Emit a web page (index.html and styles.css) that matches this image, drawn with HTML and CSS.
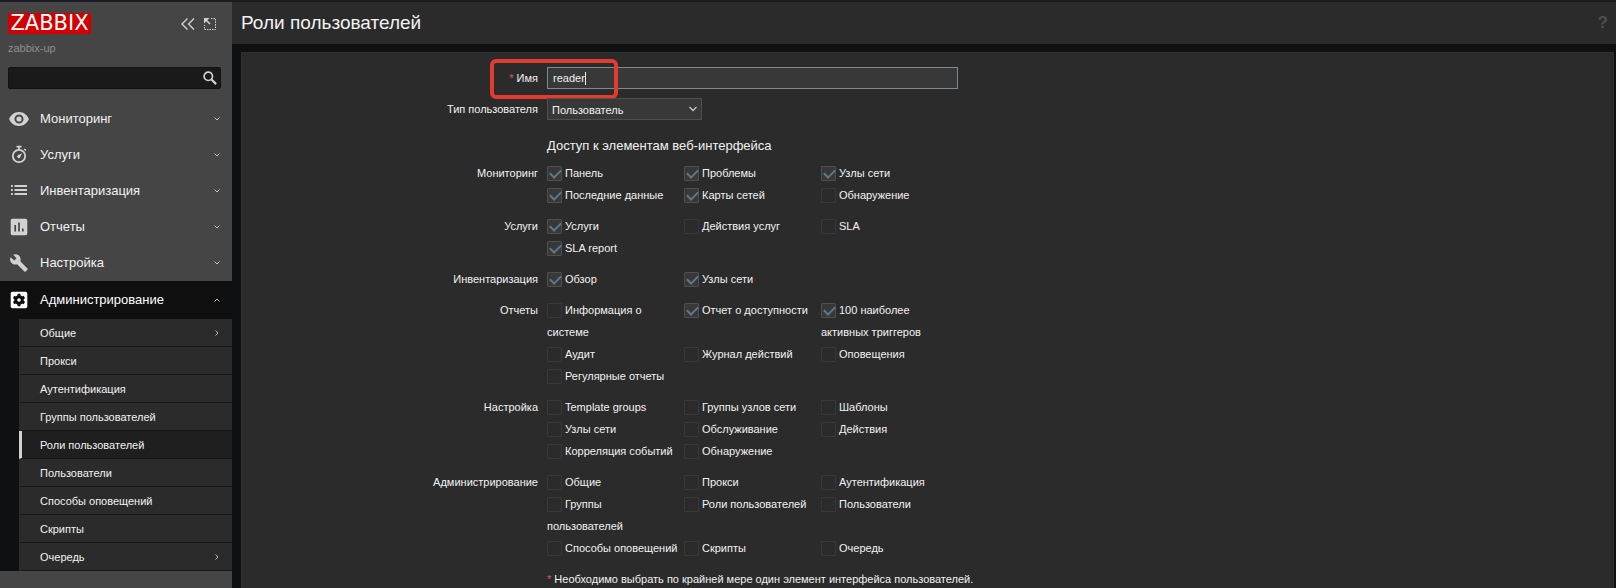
FILE: index.html
```html
<!DOCTYPE html>
<html lang="ru">
<head>
<meta charset="utf-8">
<title>Роли пользователей</title>
<link rel="stylesheet" href="styles.css">
</head>
<body>
<div class="layout">
  <aside class="sidebar">
    <div class="brand">
      <a class="logo" href="#">ZABBIX</a>
      <div class="brand-actions">
        <button type="button" aria-label="Свернуть">
          <svg width="14" height="14" viewBox="0 0 14 14" fill="none" stroke="#d2d2d2" stroke-width="1.4"><path d="M6.5 1.5 1 7l5.500 5.500M13 1.500 7.500 7l5.500 5.500"/></svg>
        </button>
        <button type="button" aria-label="Скрыть">
          <svg width="12" height="12" viewBox="0 0 12 12" fill="none" stroke="#d2d2d2"><path d="M7 .5h4.500v11H.5V7" stroke-dasharray="1.500 1"/><path d="M6 6 2 2"  stroke-width="1.600"/><path d="M0 0h5.500L0 5.500z" fill="#d2d2d2" stroke="none"/></svg>
        </button>
      </div>
    </div>
    <div class="server">zabbix-up</div>
    <form class="search">
      <input type="text" aria-label="Поиск">
      <button type="button" aria-label="Найти">
        <svg width="14" height="14" viewBox="0 0 14 14" fill="none" stroke="#d2d2d2"><circle cx="5.300" cy="5.300" r="4.200" stroke-width="1.700"/><path d="m8.300 8.300 4.800 4.800" stroke-width="2.200"/></svg>
      </button>
    </form>
    <nav class="menu">
      <a href="#"><svg class="icon" viewBox="0 0 20 20"><path fill="#d2d2d2" fill-rule="evenodd" d="M10 3C5.500 3 1.700 5.800.1 10c1.600 4.200 5.400 7 9.900 7s8.300-2.800 9.900-7C18.300 5.800 14.500 3 10 3zm0 11.500a4.500 4.500 0 1 1 0-9 4.500 4.500 0 0 1 0 9z"/><circle cx="10" cy="10" r="2.600" fill="#d2d2d2"/></svg><span>Мониторинг</span><svg class="arrow" viewBox="0 0 6 6"><path d="m.5 1.500 2.500 2.500 2.500-2.500"/></svg></a>
      <a href="#"><svg class="icon" viewBox="0 0 20 20" fill="none" stroke="#d2d2d2"><circle cx="10" cy="11" r="6.200" stroke-width="1.800"/><path d="M7.500 1.700h5M10 2v3M15.300 4l1.500 1.500" stroke-width="1.700"/><path d="M13 8.200 11.200 12.300a1.600 1.600 0 1 1-2.400-2z" fill="#d2d2d2" stroke="none"/></svg><span>Услуги</span><svg class="arrow" viewBox="0 0 6 6"><path d="m.5 1.500 2.500 2.500 2.500-2.500"/></svg></a>
      <a href="#"><svg class="icon" viewBox="0 0 20 20" stroke="#d2d2d2" stroke-width="2"><path d="M2 5h1.800M5.500 5H18M2 9h1.800M5.500 9H18M2 13h1.800M5.500 13H18"/></svg><span>Инвентаризация</span><svg class="arrow" viewBox="0 0 6 6"><path d="m.5 1.500 2.500 2.500 2.500-2.500"/></svg></a>
      <a href="#"><svg class="icon" viewBox="0 0 20 20"><rect x="1.700" y="1.700" width="16.600" height="16.600" rx="1.800" fill="#d2d2d2"/><path d="M6.200 8v6.500M10 5.500v9M13.800 11.500v3" stroke="#454545" stroke-width="1.700"/></svg><span>Отчеты</span><svg class="arrow" viewBox="0 0 6 6"><path d="m.5 1.500 2.500 2.500 2.500-2.500"/></svg></a>
      <a href="#"><svg class="icon" viewBox="0 0 24 24"><path fill="#d2d2d2" d="m22.200 18.600-8.700-8.700c.9-2.200.4-4.800-1.400-6.600C10.200 1.400 7.300 1 5 2.100l4.100 4.100-2.900 2.900L2 5C.8 7.300 1.300 10.200 3.200 12.100c1.800 1.800 4.400 2.300 6.600 1.400l8.700 8.700c.4.400 1 .4 1.400 0l2.200-2.200c.5-.4.500-1.100.1-1.400z"/></svg><span>Настройка</span><svg class="arrow" viewBox="0 0 6 6"><path d="m.5 1.500 2.500 2.500 2.500-2.500"/></svg></a>
      <a href="#" class="open"><svg class="icon" viewBox="0 0 20 20"><rect x="1.700" y="1.700" width="16.600" height="16.600" rx="1.800" fill="#fff"/><circle cx="10" cy="10" r="3.300" fill="none" stroke="#0f0f0f" stroke-width="3"/><path d="M10 3.800v3M10 13.200v3M4.600 6.900l2.600 1.500M12.800 11.600l2.600 1.500M4.600 13.100l2.600-1.500M12.800 8.400l2.600-1.500" stroke="#0f0f0f" stroke-width="2.900"/></svg><span>Администрирование</span><svg class="arrow" viewBox="0 0 6 6"><path d="M.5 4.500 3 2l2.500 2.500"/></svg></a>
      <div class="submenu">
        <a href="#"><span>Общие</span><svg class="arrow" viewBox="0 0 6 6"><path d="M1.500.5 4 3 1.500 5.500"/></svg></a>
        <a href="#">Прокси</a>
        <a href="#">Аутентификация</a>
        <a href="#">Группы пользователей</a>
        <a href="#" class="current">Роли пользователей</a>
        <a href="#">Пользователи</a>
        <a href="#">Способы оповещений</a>
        <a href="#">Скрипты</a>
        <a href="#"><span>Очередь</span><svg class="arrow" viewBox="0 0 6 6"><path d="M1.500.5 4 3 1.500 5.500"/></svg></a>
      </div>
    </nav>
  </aside>
  <main class="content">
    <header class="header">
      <h1>Роли пользователей</h1>
      <a class="help" href="#" aria-label="Помощь">?</a>
    </header>
    <form class="card">
      <label class="name required" for="name">Имя</label>
      <div class="field">
        <input class="textbox" id="name" type="text" value="reader">
        <span class="caret"></span>
        <span class="highlight"></span>
      </div>
      <label class="name" for="type">Тип пользователя</label>
      <div class="field"><select class="select" id="type"><option>Пользователь</option></select></div>

      <h2>Доступ к элементам веб-интерфейса</h2>

      <span class="name" id="g1">Мониторинг</span>
      <div class="checks" role="group" aria-labelledby="g1">
        <label><input type="checkbox" checked>Панель</label>
        <label><input type="checkbox" checked>Проблемы</label>
        <label><input type="checkbox" checked>Узлы сети</label>
        <label><input type="checkbox" checked>Последние данные</label>
        <label><input type="checkbox" checked>Карты сетей</label>
        <label><input type="checkbox">Обнаружение</label>
      </div>

      <span class="name" id="g2">Услуги</span>
      <div class="checks" role="group" aria-labelledby="g2">
        <label><input type="checkbox" checked>Услуги</label>
        <label><input type="checkbox">Действия услуг</label>
        <label><input type="checkbox">SLA</label>
        <label><input type="checkbox" checked>SLA report</label>
      </div>

      <span class="name" id="g3">Инвентаризация</span>
      <div class="checks" role="group" aria-labelledby="g3">
        <label><input type="checkbox" checked>Обзор</label>
        <label><input type="checkbox" checked>Узлы сети</label>
      </div>

      <span class="name" id="g4">Отчеты</span>
      <div class="checks" role="group" aria-labelledby="g4">
        <label><input type="checkbox">Информация о системе</label>
        <label><input type="checkbox" checked>Отчет о доступности</label>
        <label><input type="checkbox" checked>100 наиболее активных триггеров</label>
        <label><input type="checkbox">Аудит</label>
        <label><input type="checkbox">Журнал действий</label>
        <label><input type="checkbox">Оповещения</label>
        <label><input type="checkbox">Регулярные отчеты</label>
      </div>

      <span class="name" id="g5">Настройка</span>
      <div class="checks" role="group" aria-labelledby="g5">
        <label><input type="checkbox">Template groups</label>
        <label><input type="checkbox">Группы узлов сети</label>
        <label><input type="checkbox">Шаблоны</label>
        <label><input type="checkbox">Узлы сети</label>
        <label><input type="checkbox">Обслуживание</label>
        <label><input type="checkbox">Действия</label>
        <label><input type="checkbox">Корреляция событий</label>
        <label><input type="checkbox">Обнаружение</label>
      </div>

      <span class="name" id="g6">Администрирование</span>
      <div class="checks" role="group" aria-labelledby="g6">
        <label><input type="checkbox">Общие</label>
        <label><input type="checkbox">Прокси</label>
        <label><input type="checkbox">Аутентификация</label>
        <label><input type="checkbox">Группы пользователей</label>
        <label><input type="checkbox">Роли пользователей</label>
        <label><input type="checkbox">Пользователи</label>
        <label><input type="checkbox">Способы оповещений</label>
        <label><input type="checkbox">Скрипты</label>
        <label><input type="checkbox">Очередь</label>
      </div>

      <p class="note required">Необходимо выбрать по крайней мере один элемент интерфейса пользователей.</p>
    </form>
  </main>
</div>
</body>
</html>
```
FILE: styles.css
```css
* { box-sizing: border-box; }

body {
  margin: 0;
  background: #0e1012;
  color: #f2f2f2;
  font: 11px/22px "Liberation Sans", Arial, sans-serif;
}

a { color: inherit; text-decoration: none; }
button { border: 0; padding: 0; background: none; display: flex; }

.layout {
  display: flex;
  min-height: 100vh;
  border-top: 2px solid #1b1b24;
}

/* Sidebar */
.sidebar {
  flex: 0 0 232px;
  background: #454545;
}

.brand {
  display: flex;
  justify-content: space-between;
  padding: 11px 16px 0 8px;
}

.logo {
  width: 83px;
  height: 21px;
  background: #d40000;
  color: #fff;
  font: 21px/21px "DejaVu Sans", sans-serif;
  text-align: center;
}

.brand-actions { display: flex; align-items: center; gap: 9px; }

.server {
  padding: 3px 8px 0;
  color: #8a8f94;
}

.search {
  display: flex;
  align-items: center;
  height: 22px;
  margin: 8px 11px 12px 8px;
  padding-right: 3px;
  background: #1a1a1a;
  border: 1px solid #0e1418;
  border-radius: 2px;
}

.search input {
  flex: 1;
  min-width: 0;
  border: 0;
  background: none;
  color: inherit;
  outline: 0;
}

.menu > a {
  display: flex;
  align-items: center;
  height: 36px;
  padding: 0 12px 0 9px;
  font-size: 13px;
}

.menu > a.open { height: 38px; background: #0f0f0f; color: #fff; }
.menu span { flex: 1; }
.icon { width: 20px; height: 20px; margin-right: 11px; }
.arrow { width: 6px; height: 6px; fill: none; stroke: #c0c0c0; }

.submenu { padding-left: 19px; background: #0e1012; }

.submenu a {
  display: flex;
  align-items: center;
  height: 28px;
  padding: 0 12px 0 18px;
  background: #2b2b2b;
  border-left: 3px solid #2b2b2b;
  border-bottom: 1px solid #161616;
}

.submenu a.current { background: #1f1f1f; border-left-color: #d2d2d2; }

/* Page */
.content {
  flex: 1;
  display: flex;
  flex-direction: column;
}

.header {
  display: flex;
  justify-content: space-between;
  align-items: center;
  height: 42px;
  padding: 0 8px 0 9px;
  background: #2b2b2b;
}

h1 { margin: 0; font-size: 19px; font-weight: 400; }
.help { color: #4f4f4f; font-size: 17px; font-weight: 700; }

.card {
  flex: 1;
  display: grid;
  grid-template-columns: 296px 1fr;
  align-content: start;
  gap: 9px;
  margin: 8px 2px 0 9px;
  padding-top: 14px;
  background: #2b2b2b;
  border: 1px solid #303030;
  border-bottom: 0;
}

.name { text-align: right; }
.required::before { content: "* "; color: #e45959; }
.field { position: relative; display: flex; }

.textbox {
  width: 411px;
  height: 22px;
  padding: 0 5px;
  background: #383838;
  border: 1px solid #768d99;
  color: inherit;
  font: inherit;
  outline: 0;
}

.caret {
  position: absolute;
  left: 38px;
  top: 5px;
  width: 1px;
  height: 13px;
  background: #f2f2f2;
}

.highlight {
  position: absolute;
  left: -57px;
  top: -8px;
  width: 128px;
  height: 40px;
  border: 4px solid #e33b2e;
  border-radius: 6px;
  pointer-events: none;
}

.select {
  appearance: none;
  width: 155px;
  height: 22px;
  padding: 0 20px 0 4px;
  background: #383838 url('data:image/svg+xml,<svg xmlns="http://www.w3.org/2000/svg" width="8" height="6" fill="none" stroke="%23c8c8c8" stroke-width="1.300"><path d="m.5 1 3.500 3.500L7.500 1"/></svg>') no-repeat right 4px center;
  border: 1px solid #4f4f4f;
  color: inherit;
  font: inherit;
}

h2 {
  grid-column: 2;
  margin: 6px 0 -4px;
  font-size: 13px;
  font-weight: 400;
  line-height: 22px;
}

.checks {
  display: grid;
  grid-template-columns: repeat(3, 137px);
}

.checks label { padding-right: 4px; }

.checks input {
  appearance: none;
  position: relative;
  width: 15px;
  height: 15px;
  margin: -2px 3px 0 0;
  background: #2b2b2b;
  border: 1px solid #383838;
  border-radius: 1px;
  vertical-align: middle;
}

.checks input:checked { background: #383838; border-color: #4f4f4f; }

.checks input:checked::before {
  content: "";
  position: absolute;
  left: 2px;
  top: 2px;
  width: 9px;
  height: 5px;
  border: solid #60798a;
  border-width: 0 0 2px 2px;
  transform: rotate(-45deg);
}

.note { grid-column: 2; margin: 0; }
```
